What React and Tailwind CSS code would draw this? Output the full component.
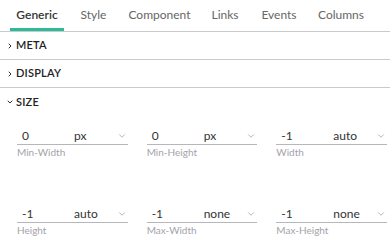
import { ChevronDown, ChevronRight } from 'lucide-react'

const tabs = [
  { name: 'Generic', w: 'w-[54px]' },
  { name: 'Style', w: 'w-[57px]' },
  { name: 'Component', w: 'w-[75px]' },
  { name: 'Links', w: 'w-[56px]' },
  { name: 'Events', w: 'w-[52px]' },
  { name: 'Columns', w: 'w-[72px]' },
]

const sizeFields = [
  { value: '0', unit: 'px', label: 'Min-Width' },
  { value: '0', unit: 'px', label: 'Min-Height' },
  { value: '-1', unit: 'auto', label: 'Width' },
  { value: '-1', unit: 'auto', label: 'Height' },
  { value: '-1', unit: 'none', label: 'Max-Width' },
  { value: '-1', unit: 'none', label: 'Max-Height' },
]

function Section({ title, open }) {
  const Icon = open ? ChevronDown : ChevronRight
  return (
    <div className={`flex h-[28px] items-center gap-[2px] pl-[6px] ${open ? '' : 'border-b border-[#c9c9ce]'}`}>
      <Icon size={8} strokeWidth={3} className="text-[#333]" />
      <span className="text-[11px] font-semibold uppercase tracking-[0.2px] text-[#222]">{title}</span>
    </div>
  )
}

function SizeField({ field }) {
  return (
    <div className="flex flex-col">
      <div className="flex h-[17px] items-center border-b border-[#b6b6bd] pl-[5px] pr-[1px] text-[12px] text-[#333]">
        <span className="w-[52px]">{field.value}</span>
        <span className="flex-1">{field.unit}</span>
        <ChevronDown size={10} strokeWidth={1.5} className="text-[#888]" />
      </div>
      <span className="text-[10px] text-[#a3a3aa]">{field.label}</span>
    </div>
  )
}

export default function App() {
  return (
    <div className="h-[247px] w-[390px] bg-white font-['Lato',sans-serif]">
      <div className="flex h-[32px] border-b border-[#c9c9ce] pl-[10px]">
        {tabs.map((t, i) => (
          <div
            key={t.name}
            className={`flex items-center justify-center pt-[1px] text-[12px] ${t.w} ${
              i === 0 ? 'w-[53px] mr-[1px] border-b-[3px] border-[#2dbb97] font-semibold text-[#333]' : 'pb-[3px] text-[#666]'
            }`}
          >
            {t.name}
          </div>
        ))}
      </div>
      <Section title="Meta" />
      <Section title="Display" />
      <Section title="Size" open />
      <div className="grid grid-cols-3 gap-x-[19px] gap-y-[46px] pl-[17px] pr-[3px] pt-[12px]">
        {sizeFields.map((f) => (
          <SizeField key={f.label} field={f} />
        ))}
      </div>
    </div>
  )
}
